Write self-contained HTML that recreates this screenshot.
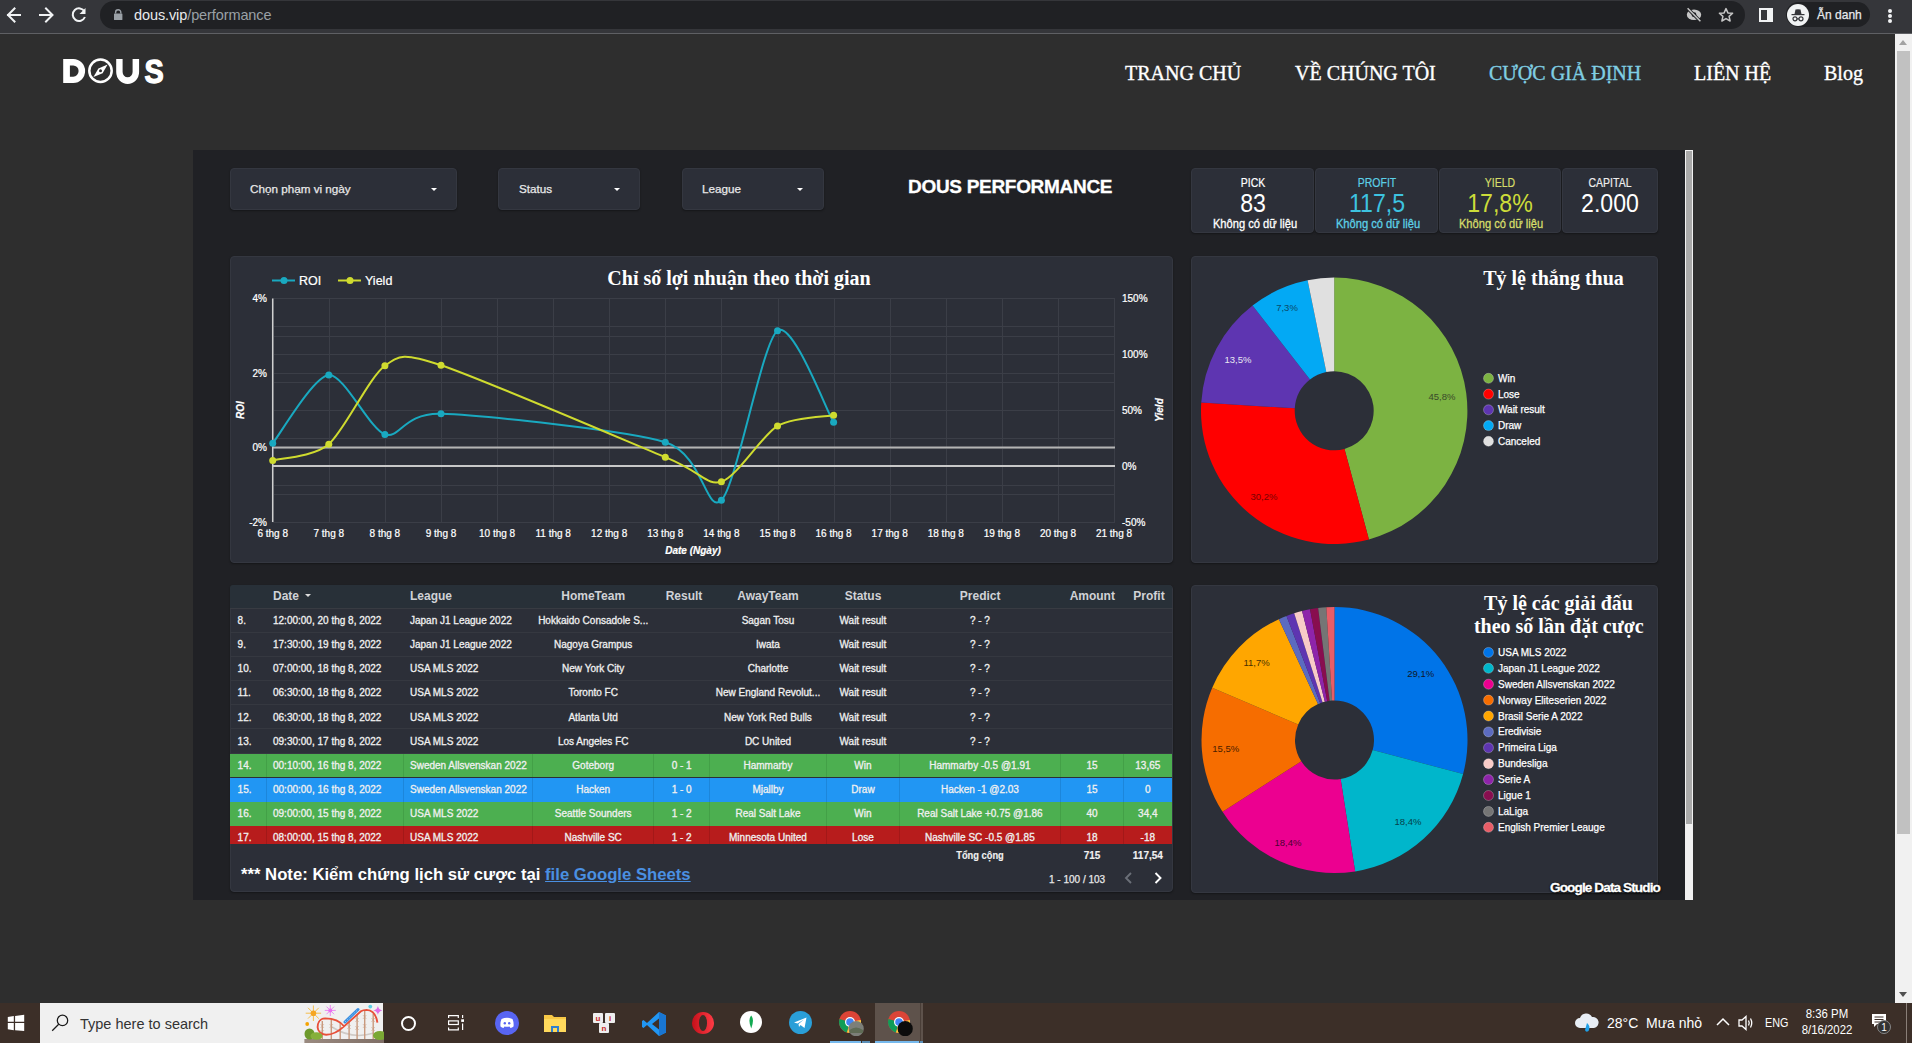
<!DOCTYPE html><html><head><meta charset="utf-8"><style>
*{margin:0;padding:0;box-sizing:border-box}
html,body{width:1912px;height:1043px;overflow:hidden;background:#2e2e2e;font-family:'Liberation Sans',sans-serif}
div{position:absolute}
.nav{top:62px;font:20px 'Liberation Serif',serif;white-space:nowrap;-webkit-text-stroke:0.35px currentColor}
.card{background:#2c2f38;border-radius:4px;border:1px solid #343740;box-shadow:0 1px 2px rgba(0,0,0,0.35)}
.ft{font:11.7px 'Liberation Sans',sans-serif;color:#e8e8e8;white-space:nowrap;-webkit-text-stroke:0.25px currentColor}
.caret{width:0;height:0;border-left:3.5px solid transparent;border-right:3.5px solid transparent;border-top:3.5px solid #fff}
.kl{width:120px;text-align:center;font:12.5px 'Liberation Sans',sans-serif;white-space:nowrap;transform:scaleX(0.84);-webkit-text-stroke:0.2px currentColor}
.kv{width:120px;text-align:center;font:25px 'Liberation Sans',sans-serif;white-space:nowrap;transform:scaleX(0.925)}
.ks{width:120px;text-align:center;font:12.8px 'Liberation Sans',sans-serif;white-space:nowrap;transform:scaleX(0.87);-webkit-text-stroke:0.3px currentColor}
.th{font:bold 12px 'Liberation Sans',sans-serif;color:#d0d2d6;white-space:nowrap}
.td{font:10px 'Liberation Sans',sans-serif;color:#f0f0f0;white-space:nowrap;-webkit-text-stroke:0.3px currentColor}
.tf{font:bold 10px 'Liberation Sans',sans-serif;color:#f0f0f0;white-space:nowrap;-webkit-text-stroke:0.15px currentColor}
.pg{font:10px 'Liberation Sans',sans-serif;color:#e8e8e8;white-space:nowrap;-webkit-text-stroke:0.25px currentColor}
</style></head><body>

<div style="position:absolute;left:0;top:34px;width:1895px;height:969px;background:#2e2e2e;"></div>
<!-- page scrollbar -->
<div style="position:absolute;left:1895px;top:34px;width:17px;height:969px;background:#f1f1f1;"></div>
<div style="position:absolute;left:1897px;top:51px;width:13px;height:783px;background:#c1c1c1;"></div>
<div style="position:absolute;left:1899px;top:40px;width:0;height:0;border-left:4.5px solid transparent;border-right:4.5px solid transparent;border-bottom:5px solid #a3a3a3;"></div>
<div style="position:absolute;left:1899px;top:992px;width:0;height:0;border-left:4.5px solid transparent;border-right:4.5px solid transparent;border-top:5px solid #505050;"></div>

<div id="toolbar" style="position:absolute;left:0;top:0;width:1912px;height:33px;background:#35363a;"></div>
<div style="position:absolute;left:0;top:33px;width:1912px;height:1px;background:#5f6064;"></div>
<!-- back -->
<svg style="position:absolute;left:0;top:0" width="100" height="33" viewBox="0 0 100 33">
 <g stroke="#f1f3f4" stroke-width="2" fill="none" stroke-linecap="square">
  <path d="M8 15 H20"/><path d="M14.5 8.5 L8 15 L14.5 21.5"/>
  <path d="M40 15 H52"/><path d="M46 8.5 L52.5 15 L46 21.5"/>
 </g>
 <path d="M84.5 11.5 A6.3 6.3 0 1 0 84.9 17" stroke="#f1f3f4" stroke-width="2" fill="none"/>
 <path d="M85.5 8 L85.5 14 L79.5 14 Z" fill="#f1f3f4"/>
</svg>
<div style="position:absolute;left:100px;top:1px;width:1645px;height:28px;border-radius:14px;background:#202124;"></div>
<svg style="position:absolute;left:100px;top:0" width="30" height="30" viewBox="100 0 30 30">
 <path d="M115.6 13.6 V12.4 A2.6 2.6 0 0 1 120.8 12.4 V13.6" stroke="#9aa0a6" stroke-width="1.4" fill="none"/>
 <rect x="114" y="13.4" width="8.4" height="6.6" rx="0.6" fill="#9aa0a6"/>
</svg>
<div style="position:absolute;left:134px;top:7px;font:14.5px 'Liberation Sans',sans-serif;color:#e8eaed;white-space:nowrap;letter-spacing:-0.1px">dous.vip<span style="color:#9aa0a6">/performance</span></div>
<!-- eye-off -->
<svg style="position:absolute;left:1680px;top:0" width="60" height="33" viewBox="1680 0 60 33">
 <ellipse cx="1694" cy="14.7" rx="7.2" ry="5.3" fill="#c6c6c6"/>
 <circle cx="1694" cy="14.7" r="2.4" fill="#202124"/>
 <path d="M1687.6 8.3 L1700.4 21.3" stroke="#202124" stroke-width="3.2"/>
 <path d="M1687.6 8.3 L1700.4 21.3" stroke="#c6c6c6" stroke-width="1.5"/>
 <path d="M1726 8.6 L1727.9 12.9 L1732.6 13.3 L1729.1 16.4 L1730.1 21 L1726 18.6 L1721.9 21 L1722.9 16.4 L1719.4 13.3 L1724.1 12.9 Z" stroke="#c6c6c6" stroke-width="1.5" fill="none" stroke-linejoin="round"/>
</svg>
<!-- side panel -->
<div style="position:absolute;left:1759px;top:8px;width:14px;height:14px;border:2px solid #f1f3f4;"></div>
<div style="position:absolute;left:1767px;top:8px;width:6px;height:14px;background:#f1f3f4"></div>
<!-- incognito pill -->
<div style="position:absolute;left:1786px;top:2px;width:84px;height:25px;border-radius:13px;background:#202124;"></div>
<div style="position:absolute;left:1787px;top:4px;width:22px;height:22px;border-radius:11px;background:#f1f3f4;"></div>
<svg style="position:absolute;left:1787px;top:4px" width="22" height="22" viewBox="0 0 22 22">
 <path d="M7.5 10 L8.5 5.5 Q11 4.8 13.5 5.5 L14.5 10 Z" fill="#35363a"/>
 <rect x="4.5" y="10" width="13" height="1.2" fill="#35363a"/>
 <circle cx="8" cy="14.8" r="2" stroke="#35363a" stroke-width="1.2" fill="none"/>
 <circle cx="14" cy="14.8" r="2" stroke="#35363a" stroke-width="1.2" fill="none"/>
 <path d="M10 14.8 H12" stroke="#35363a" stroke-width="1.2"/>
</svg>
<div style="position:absolute;left:1817px;top:7px;font:13.5px 'Liberation Sans',sans-serif;color:#e8eaed;white-space:nowrap;transform:scaleX(0.89);transform-origin:0 0;-webkit-text-stroke:0.25px #e8eaed">Ẫn danh</div>
<div style="position:absolute;left:1888px;top:9px;width:4px;height:4px;border-radius:2px;background:#f1f3f4;box-shadow:0 5px 0 #f1f3f4,0 10px 0 #f1f3f4"></div>

<svg style="position:absolute;left:0;top:0" width="200" height="100" viewBox="0 0 200 100">
 <path fill-rule="evenodd" fill="#fff" d="M63.2 59.1 H73.3 A11.8 11.95 0 0 1 73.3 83 H63.2 Z M69.9 65.4 V76.7 H73.2 A5.4 5.65 0 0 0 73.2 65.4 Z"/>
 <circle cx="100.5" cy="70.8" r="11.2" stroke="#fff" stroke-width="2.5" fill="none"/>
 <path d="M107.6 64.6 L102.6 73.2 L93.4 77 L98.4 68.4 Z" fill="#fff"/>
 <circle cx="100.5" cy="70.8" r="1.5" fill="#2e2e2e"/>
 <path fill="#fff" d="M116.2 59.1 H122.6 V72 A5 5.2 0 0 0 132.6 72 V59.1 H139.1 V72 A11.45 11.9 0 0 1 116.2 72 Z"/>
 <text x="154" y="83" font-family="Liberation Sans" font-weight="bold" font-size="33.5" fill="#fff" stroke="#fff" stroke-width="1.3" text-anchor="middle" transform="translate(154 0) scale(0.86 1) translate(-154 0)">S</text>
</svg>
<div class="nav" style="left:1125px;color:#fff">TRANG CHỦ</div>
<div class="nav" style="left:1295px;color:#fff">VỀ CHÚNG TÔI</div>
<div class="nav" style="left:1489px;color:#80cfe3">CƯỢC GIẢ ĐỊNH</div>
<div class="nav" style="left:1694px;color:#fff">LIÊN HỆ</div>
<div class="nav" style="left:1824px;color:#fff">Blog</div>

<div style="position:absolute;left:193px;top:150px;width:1492px;height:750px;background:#202125;"></div>
<!-- inner scrollbar -->
<div style="position:absolute;left:1685px;top:150px;width:8px;height:750px;background:#f1f1f1;"></div>
<div style="position:absolute;left:1686px;top:151px;width:6px;height:673px;background:#a9a9a9;"></div>
<div class="card" style="left:230px;top:168px;width:227px;height:42px;"></div>
<div class="card" style="left:498px;top:168px;width:142px;height:42px;"></div>
<div class="card" style="left:682px;top:168px;width:142px;height:42px;"></div>
<div class="card" style="left:1191px;top:168px;width:123px;height:65px;"></div>
<div class="card" style="left:1315px;top:168px;width:123px;height:65px;"></div>
<div class="card" style="left:1439px;top:168px;width:122px;height:65px;"></div>
<div class="card" style="left:1562px;top:168px;width:96px;height:65px;"></div>
<div class="card" style="left:230px;top:256px;width:943px;height:307px;"></div>
<div class="card" style="left:1191px;top:256px;width:467px;height:307px;"></div>
<div class="card" style="left:230px;top:585px;width:943px;height:307px;"></div>
<div class="card" style="left:1191px;top:585px;width:467px;height:308px;"></div>
<div class="ft" style="left:250px;top:182px">Chọn phạm vi ngày</div>
<div class="ft" style="left:519px;top:182px">Status</div>
<div class="ft" style="left:702px;top:182px">League</div>
<div class="caret" style="left:431px;top:188px"></div>
<div class="caret" style="left:614px;top:188px"></div>
<div class="caret" style="left:797px;top:188px"></div>
<div style="position:absolute;left:908px;top:176px;font:bold 19px 'Liberation Sans',sans-serif;color:#fff;white-space:nowrap;letter-spacing:-0.3px;-webkit-text-stroke:0.3px #fff">DOUS PERFORMANCE</div>
<div class="kl" style="left:1192.5px;top:176px;color:#fff">PICK</div>
<div class="kv" style="left:1192.5px;top:189px;color:#fff">83</div>
<div class="ks" style="left:1194.5px;top:216px;color:#fff">Không có dữ liệu</div>
<div class="kl" style="left:1316.5px;top:176px;color:#5ccfe6">PROFIT</div>
<div class="kv" style="left:1316.5px;top:189px;color:#3dc3e0">117,5</div>
<div class="ks" style="left:1317.5px;top:216px;color:#5ccfe6">Không có dữ liệu</div>
<div class="kl" style="left:1440px;top:176px;color:#d6dd6a">YIELD</div>
<div class="kv" style="left:1440px;top:189px;color:#cddc39">17,8%</div>
<div class="ks" style="left:1441px;top:216px;color:#d6dd6a">Không có dữ liệu</div>
<div class="kl" style="left:1550px;top:176px;color:#eee">CAPITAL</div>
<div class="kv" style="left:1550px;top:189px;color:#fff">2.000</div>
<svg style="position:absolute;left:0;top:0" width="1912" height="1043" viewBox="0 0 1912 1043">
<g stroke="#3b3e47" stroke-width="1">
<path d="M273.5 298.5 V522"/><path d="M329.5 298.5 V522"/><path d="M385.5 298.5 V522"/><path d="M441.5 298.5 V522"/><path d="M497.5 298.5 V522"/><path d="M553.5 298.5 V522"/><path d="M609.5 298.5 V522"/><path d="M665.5 298.5 V522"/><path d="M721.5 298.5 V522"/><path d="M778.5 298.5 V522"/><path d="M834.5 298.5 V522"/><path d="M890.5 298.5 V522"/><path d="M946.5 298.5 V522"/><path d="M1002.5 298.5 V522"/><path d="M1058.5 298.5 V522"/><path d="M1114.5 298.5 V522"/><path d="M272.7 298.5 H1115"/><path d="M272.7 336.5 H1115"/><path d="M272.7 373.5 H1115"/><path d="M272.7 410.5 H1115"/><path d="M272.7 448.5 H1115"/><path d="M272.7 485.5 H1115"/><path d="M272.7 522.5 H1115"/><path d="M272.7 298.5 H1115"/><path d="M272.7 326.5 H1115"/><path d="M272.7 354.5 H1115"/><path d="M272.7 382.5 H1115"/><path d="M272.7 410.5 H1115"/><path d="M272.7 438.5 H1115"/><path d="M272.7 466.5 H1115"/><path d="M272.7 494.5 H1115"/><path d="M272.7 522.5 H1115"/></g>
<path d="M272.7 447.5 H1115" stroke="#b4b4b4" stroke-width="2"/>
<path d="M272.7 466.1 H1115" stroke="#c8c8c8" stroke-width="2"/>
<path d="M272.7 298.5 V522" stroke="#d0d0d0" stroke-width="1.5"/>
<path d="M272.7 443.2 C280.3 434.0 313.6 376.2 328.8 375.0 C343.9 373.8 369.7 429.2 384.9 434.4 C400.0 439.6 403.1 412.7 441.0 413.8 C478.8 414.9 627.5 430.5 665.3 442.2 C703.2 453.9 706.3 515.3 721.4 500.2 C736.6 485.1 762.4 341.2 777.5 330.7 C792.7 320.2 826.0 409.9 833.6 422.3" stroke="#19a9c0" stroke-width="2" fill="none"/>
<path d="M272.7 460.5 C280.3 458.3 313.6 457.0 328.8 444.2 C343.9 431.4 369.7 376.4 384.9 365.7 C400.0 355.0 403.1 352.8 441.0 365.2 C478.8 377.6 627.5 441.5 665.3 457.2 C703.2 472.9 706.3 485.9 721.4 481.7 C736.6 477.5 762.4 434.9 777.5 425.9 C792.7 416.9 826.0 416.6 833.6 415.2" stroke="#cfdb2f" stroke-width="2" fill="none"/>
<circle cx="272.7" cy="443.2" r="3.5" fill="#19a9c0"/><circle cx="328.8" cy="375" r="3.5" fill="#19a9c0"/><circle cx="384.9" cy="434.4" r="3.5" fill="#19a9c0"/><circle cx="441.0" cy="413.8" r="3.5" fill="#19a9c0"/><circle cx="665.3" cy="442.2" r="3.5" fill="#19a9c0"/><circle cx="721.4" cy="500.2" r="3.5" fill="#19a9c0"/><circle cx="777.5" cy="330.7" r="3.5" fill="#19a9c0"/><circle cx="833.6" cy="422.3" r="3.5" fill="#19a9c0"/><circle cx="272.7" cy="460.5" r="3.5" fill="#cfdb2f"/><circle cx="328.8" cy="444.2" r="3.5" fill="#cfdb2f"/><circle cx="384.9" cy="365.7" r="3.5" fill="#cfdb2f"/><circle cx="441.0" cy="365.2" r="3.5" fill="#cfdb2f"/><circle cx="665.3" cy="457.2" r="3.5" fill="#cfdb2f"/><circle cx="721.4" cy="481.7" r="3.5" fill="#cfdb2f"/><circle cx="777.5" cy="425.9" r="3.5" fill="#cfdb2f"/><circle cx="833.6" cy="415.2" r="3.5" fill="#cfdb2f"/>
<path d="M272 280.5 H295" stroke="#19a9c0" stroke-width="2"/><circle cx="284" cy="280.5" r="3.5" fill="#19a9c0"/>
<path d="M338 280.5 H361" stroke="#cfdb2f" stroke-width="2"/><circle cx="350" cy="280.5" r="3.5" fill="#cfdb2f"/>
<g font-family="Liberation Sans" fill="#fff" stroke="#fff" stroke-width="0.22">
<text x="299" y="285" font-size="12.5">ROI</text><text x="365" y="285" font-size="12.5">Yield</text>
<text x="267" y="302.0" font-size="10" text-anchor="end">4%</text><text x="267" y="376.5" font-size="10" text-anchor="end">2%</text><text x="267" y="451.0" font-size="10" text-anchor="end">0%</text><text x="267" y="525.5" font-size="10" text-anchor="end">-2%</text><text x="1122" y="302.0" font-size="10">150%</text><text x="1122" y="357.9" font-size="10">100%</text><text x="1122" y="413.8" font-size="10">50%</text><text x="1122" y="469.6" font-size="10">0%</text><text x="1122" y="525.5" font-size="10">-50%</text>
<text x="272.7" y="537" font-size="10" text-anchor="middle">6 thg 8</text><text x="328.8" y="537" font-size="10" text-anchor="middle">7 thg 8</text><text x="384.9" y="537" font-size="10" text-anchor="middle">8 thg 8</text><text x="441.0" y="537" font-size="10" text-anchor="middle">9 thg 8</text><text x="497.1" y="537" font-size="10" text-anchor="middle">10 thg 8</text><text x="553.2" y="537" font-size="10" text-anchor="middle">11 thg 8</text><text x="609.2" y="537" font-size="10" text-anchor="middle">12 thg 8</text><text x="665.3" y="537" font-size="10" text-anchor="middle">13 thg 8</text><text x="721.4" y="537" font-size="10" text-anchor="middle">14 thg 8</text><text x="777.5" y="537" font-size="10" text-anchor="middle">15 thg 8</text><text x="833.6" y="537" font-size="10" text-anchor="middle">16 thg 8</text><text x="889.7" y="537" font-size="10" text-anchor="middle">17 thg 8</text><text x="945.8" y="537" font-size="10" text-anchor="middle">18 thg 8</text><text x="1001.9" y="537" font-size="10" text-anchor="middle">19 thg 8</text><text x="1058.0" y="537" font-size="10" text-anchor="middle">20 thg 8</text><text x="1114.0" y="537" font-size="10" text-anchor="middle">21 thg 8</text>
<text x="693" y="554" font-size="10" font-style="italic" font-weight="bold" text-anchor="middle">Date (Ngày)</text>
<text transform="translate(244 410) rotate(-90)" font-size="10" font-style="italic" font-weight="bold" text-anchor="middle">ROI</text>
<text transform="translate(1163 410) rotate(-90)" font-size="10" font-style="italic" font-weight="bold" text-anchor="middle">Yield</text>
</g>
<text x="739" y="285" font-family="Liberation Serif" font-weight="bold" font-size="20" fill="#fff" text-anchor="middle">Chỉ số lợi nhuận theo thời gian</text>
</svg>
<svg style="position:absolute;left:0;top:0" width="1912" height="1043" viewBox="0 0 1912 1043">
<path d="M1334.20 277.60 A133.2 133.2 0 0 1 1368.94 539.39 L1344.50 448.93 A39.5 39.5 0 0 0 1334.20 371.30 Z" fill="#7cb342"/><path d="M1368.94 539.39 A133.2 133.2 0 0 1 1201.26 402.44 L1294.78 408.32 A39.5 39.5 0 0 0 1344.50 448.93 Z" fill="#ff0000"/><path d="M1201.26 402.44 A133.2 133.2 0 0 1 1252.56 305.55 L1309.99 379.59 A39.5 39.5 0 0 0 1294.78 408.32 Z" fill="#5e35b1"/><path d="M1252.56 305.55 A133.2 133.2 0 0 1 1307.60 280.28 L1326.31 372.10 A39.5 39.5 0 0 0 1309.99 379.59 Z" fill="#03a9f4"/><path d="M1307.60 280.28 A133.2 133.2 0 0 1 1334.20 277.60 L1334.20 371.30 A39.5 39.5 0 0 0 1326.31 372.10 Z" fill="#e0e0e0"/>
<path d="M1334.50 607.00 A133 133 0 0 1 1463.09 773.98 L1372.69 750.09 A39.5 39.5 0 0 0 1334.50 700.50 Z" fill="#0074e8"/><path d="M1463.09 773.98 A133 133 0 0 1 1355.15 871.39 L1340.63 779.02 A39.5 39.5 0 0 0 1372.69 750.09 Z" fill="#00b6cb"/><path d="M1355.15 871.39 A133 133 0 0 1 1222.54 811.78 L1301.25 761.32 A39.5 39.5 0 0 0 1340.63 779.02 Z" fill="#ec0090"/><path d="M1222.54 811.78 A133 133 0 0 1 1212.22 687.70 L1298.18 724.47 A39.5 39.5 0 0 0 1301.25 761.32 Z" fill="#f66d00"/><path d="M1212.22 687.70 A133 133 0 0 1 1278.91 619.17 L1317.99 704.12 A39.5 39.5 0 0 0 1298.18 724.47 Z" fill="#ffa600"/><path d="M1278.91 619.17 A133 133 0 0 1 1286.45 615.98 L1320.23 703.17 A39.5 39.5 0 0 0 1317.99 704.12 Z" fill="#5c6bc0"/><path d="M1286.45 615.98 A133 133 0 0 1 1294.18 613.26 L1322.53 702.36 A39.5 39.5 0 0 0 1320.23 703.17 Z" fill="#5e35b1"/><path d="M1294.18 613.26 A133 133 0 0 1 1302.06 611.02 L1324.87 701.69 A39.5 39.5 0 0 0 1322.53 702.36 Z" fill="#f8cbc8"/><path d="M1302.06 611.02 A133 133 0 0 1 1310.06 609.26 L1327.24 701.17 A39.5 39.5 0 0 0 1324.87 701.69 Z" fill="#8e24aa"/><path d="M1310.06 609.26 A133 133 0 0 1 1318.16 608.01 L1329.65 700.80 A39.5 39.5 0 0 0 1327.24 701.17 Z" fill="#880e4f"/><path d="M1318.16 608.01 A133 133 0 0 1 1326.31 607.25 L1332.07 700.57 A39.5 39.5 0 0 0 1329.65 700.80 Z" fill="#757575"/><path d="M1326.31 607.25 A133 133 0 0 1 1334.50 607.00 L1334.50 700.50 A39.5 39.5 0 0 0 1332.07 700.57 Z" fill="#e85d67"/>
<g font-family="Liberation Sans" font-size="9.5" text-anchor="middle">
<text x="1442" y="399.5" fill="#3a4a2a">45,8%</text><text x="1264" y="499.5" fill="#7a0000">30,2%</text><text x="1238" y="362.5" fill="#e8e8f0">13,5%</text><text x="1287" y="310.5" fill="#0a4a6a">7,3%</text><text x="1420.7" y="677" fill="#101828">29,1%</text><text x="1408" y="825" fill="#06424a">18,4%</text><text x="1288" y="846" fill="#4a0030">18,4%</text><text x="1225.8" y="751.5" fill="#4a2000">15,5%</text><text x="1256.5" y="665.5" fill="#4a3000">11,7%</text></g>
<g font-family="Liberation Sans" font-size="10" fill="#fff" stroke="#fff" stroke-width="0.25">
<circle cx="1488.5" cy="378.3" r="5" fill="#7cb342"/><text x="1498" y="381.8">Win</text><circle cx="1488.5" cy="394.1" r="5" fill="#ff0000"/><text x="1498" y="397.6">Lose</text><circle cx="1488.5" cy="409.8" r="5" fill="#5e35b1"/><text x="1498" y="413.3">Wait result</text><circle cx="1488.5" cy="425.6" r="5" fill="#03a9f4"/><text x="1498" y="429.1">Draw</text><circle cx="1488.5" cy="441.3" r="5" fill="#e0e0e0"/><text x="1498" y="444.8">Canceled</text>
<circle cx="1488.5" cy="652.4" r="5" fill="#0074e8"/><text x="1498" y="655.9">USA MLS 2022</text><circle cx="1488.5" cy="668.3" r="5" fill="#00b6cb"/><text x="1498" y="671.8">Japan J1 League 2022</text><circle cx="1488.5" cy="684.2" r="5" fill="#ec0090"/><text x="1498" y="687.7">Sweden Allsvenskan 2022</text><circle cx="1488.5" cy="700.1" r="5" fill="#f66d00"/><text x="1498" y="703.6">Norway Eliteserien 2022</text><circle cx="1488.5" cy="716.0" r="5" fill="#ffa600"/><text x="1498" y="719.5">Brasil Serie A 2022</text><circle cx="1488.5" cy="731.9" r="5" fill="#5c6bc0"/><text x="1498" y="735.4">Eredivisie</text><circle cx="1488.5" cy="747.8" r="5" fill="#5e35b1"/><text x="1498" y="751.3">Primeira Liga</text><circle cx="1488.5" cy="763.7" r="5" fill="#f8cbc8"/><text x="1498" y="767.2">Bundesliga</text><circle cx="1488.5" cy="779.6" r="5" fill="#8e24aa"/><text x="1498" y="783.1">Serie A</text><circle cx="1488.5" cy="795.5" r="5" fill="#880e4f"/><text x="1498" y="799.0">Ligue 1</text><circle cx="1488.5" cy="811.4" r="5" fill="#757575"/><text x="1498" y="814.9">LaLiga</text><circle cx="1488.5" cy="827.3" r="5" fill="#e85d67"/><text x="1498" y="830.8">English Premier Leauge</text>
</g>
<g font-family="Liberation Serif" font-weight="bold" font-size="20" fill="#fff" text-anchor="middle"><text x="1553.5" y="285">Tỷ lệ thắng thua</text><text x="1558.5" y="610">Tỷ lệ các giải đấu</text><text x="1558.8" y="633">theo số lần đặt cược</text></g>
</svg>
<div style="position:absolute;left:1550px;top:880px;font:bold 13.6px 'Liberation Sans',sans-serif;color:#fff;white-space:nowrap;letter-spacing:-0.9px;-webkit-text-stroke:0.3px #fff;text-shadow:0 0 2px #000,0 1px 2px #000">Google Data Studio</div>
<div style="position:absolute;left:230px;top:585px;width:942px;height:23px;background:#283038;border-radius:3px 3px 0 0"></div>
<div class="th" style="left:273px;top:589px">Date</div><div class="th" style="left:410px;top:589px">League</div><div class="th" style="left:533.2px;top:589px;width:120px;text-align:center">HomeTeam</div><div class="th" style="left:624px;top:589px;width:120px;text-align:center">Result</div><div class="th" style="left:708px;top:589px;width:120px;text-align:center">AwayTeam</div><div class="th" style="left:803px;top:589px;width:120px;text-align:center">Status</div><div class="th" style="left:920.2px;top:589px;width:120px;text-align:center">Predict</div><div class="th" style="left:1032.3px;top:589px;width:120px;text-align:center">Amount</div><div class="th" style="left:1089px;top:589px;width:120px;text-align:center">Profit</div><div style="position:absolute;left:305px;top:594px;width:0;height:0;border-left:3px solid transparent;border-right:3px solid transparent;border-top:3.5px solid #ddd"></div>
<div style="position:absolute;left:230px;top:608px;width:943px;height:1px;background:#383b42"></div>
<div style="position:absolute;left:230px;top:608.5px;width:942px;height:235.3px;overflow:hidden">
<div style="position:absolute;left:0;top:23.3px;width:942px;height:1px;background:#353840"></div><div class="td" style="left:7.599999999999994px;top:6.5px">8.</div><div class="td" style="left:43px;top:6.5px">12:00:00, 20 thg 8, 2022</div><div class="td" style="left:180px;top:6.5px">Japan J1 League 2022</div><div class="td" style="left:302.6px;top:6.5px;width:121.2px;text-align:center">Hokkaido Consadole S...</div><div class="td" style="left:479.5px;top:6.5px;width:116.9px;text-align:center">Sagan Tosu</div><div class="td" style="left:596.4px;top:6.5px;width:73.1px;text-align:center">Wait result</div><div class="td" style="left:669.5px;top:6.5px;width:160.8px;text-align:center">? - ?</div>
<div style="position:absolute;left:0;top:47.5px;width:942px;height:1px;background:#353840"></div><div class="td" style="left:7.599999999999994px;top:30.5px">9.</div><div class="td" style="left:43px;top:30.5px">17:30:00, 19 thg 8, 2022</div><div class="td" style="left:180px;top:30.5px">Japan J1 League 2022</div><div class="td" style="left:302.6px;top:30.5px;width:121.2px;text-align:center">Nagoya Grampus</div><div class="td" style="left:479.5px;top:30.5px;width:116.9px;text-align:center">Iwata</div><div class="td" style="left:596.4px;top:30.5px;width:73.1px;text-align:center">Wait result</div><div class="td" style="left:669.5px;top:30.5px;width:160.8px;text-align:center">? - ?</div>
<div style="position:absolute;left:0;top:71.6px;width:942px;height:1px;background:#353840"></div><div class="td" style="left:7.599999999999994px;top:54.5px">10.</div><div class="td" style="left:43px;top:54.5px">07:00:00, 18 thg 8, 2022</div><div class="td" style="left:180px;top:54.5px">USA MLS 2022</div><div class="td" style="left:302.6px;top:54.5px;width:121.2px;text-align:center">New York City</div><div class="td" style="left:479.5px;top:54.5px;width:116.9px;text-align:center">Charlotte</div><div class="td" style="left:596.4px;top:54.5px;width:73.1px;text-align:center">Wait result</div><div class="td" style="left:669.5px;top:54.5px;width:160.8px;text-align:center">? - ?</div>
<div style="position:absolute;left:0;top:95.8px;width:942px;height:1px;background:#353840"></div><div class="td" style="left:7.599999999999994px;top:78.5px">11.</div><div class="td" style="left:43px;top:78.5px">06:30:00, 18 thg 8, 2022</div><div class="td" style="left:180px;top:78.5px">USA MLS 2022</div><div class="td" style="left:302.6px;top:78.5px;width:121.2px;text-align:center">Toronto FC</div><div class="td" style="left:479.5px;top:78.5px;width:116.9px;text-align:center">New England Revolut...</div><div class="td" style="left:596.4px;top:78.5px;width:73.1px;text-align:center">Wait result</div><div class="td" style="left:669.5px;top:78.5px;width:160.8px;text-align:center">? - ?</div>
<div style="position:absolute;left:0;top:119.9px;width:942px;height:1px;background:#353840"></div><div class="td" style="left:7.599999999999994px;top:103.5px">12.</div><div class="td" style="left:43px;top:103.5px">06:30:00, 18 thg 8, 2022</div><div class="td" style="left:180px;top:103.5px">USA MLS 2022</div><div class="td" style="left:302.6px;top:103.5px;width:121.2px;text-align:center">Atlanta Utd</div><div class="td" style="left:479.5px;top:103.5px;width:116.9px;text-align:center">New York Red Bulls</div><div class="td" style="left:596.4px;top:103.5px;width:73.1px;text-align:center">Wait result</div><div class="td" style="left:669.5px;top:103.5px;width:160.8px;text-align:center">? - ?</div>
<div style="position:absolute;left:0;top:144.0px;width:942px;height:1px;background:#353840"></div><div class="td" style="left:7.599999999999994px;top:127.5px">13.</div><div class="td" style="left:43px;top:127.5px">09:30:00, 17 thg 8, 2022</div><div class="td" style="left:180px;top:127.5px">USA MLS 2022</div><div class="td" style="left:302.6px;top:127.5px;width:121.2px;text-align:center">Los Angeles FC</div><div class="td" style="left:479.5px;top:127.5px;width:116.9px;text-align:center">DC United</div><div class="td" style="left:596.4px;top:127.5px;width:73.1px;text-align:center">Wait result</div><div class="td" style="left:669.5px;top:127.5px;width:160.8px;text-align:center">? - ?</div>
<div style="position:absolute;left:0;top:145.4px;width:942px;height:23.5px;background:#4caf50"></div><div style="position:absolute;left:35.9px;top:145.4px;width:1px;height:23.5px;background:#43a047"></div><div style="position:absolute;left:172.8px;top:145.4px;width:1px;height:23.5px;background:#43a047"></div><div style="position:absolute;left:302.1px;top:145.4px;width:1px;height:23.5px;background:#43a047"></div><div style="position:absolute;left:423.3px;top:145.4px;width:1px;height:23.5px;background:#43a047"></div><div style="position:absolute;left:479.0px;top:145.4px;width:1px;height:23.5px;background:#43a047"></div><div style="position:absolute;left:595.9px;top:145.4px;width:1px;height:23.5px;background:#43a047"></div><div style="position:absolute;left:669.0px;top:145.4px;width:1px;height:23.5px;background:#43a047"></div><div style="position:absolute;left:829.8px;top:145.4px;width:1px;height:23.5px;background:#43a047"></div><div style="position:absolute;left:893.2px;top:145.4px;width:1px;height:23.5px;background:#43a047"></div><div class="td" style="left:7.599999999999994px;top:151.5px">14.</div><div class="td" style="left:43px;top:151.5px">00:10:00, 16 thg 8, 2022</div><div class="td" style="left:180px;top:151.5px">Sweden Allsvenskan 2022</div><div class="td" style="left:302.6px;top:151.5px;width:121.2px;text-align:center">Goteborg</div><div class="td" style="left:423.8px;top:151.5px;width:55.7px;text-align:center">0 - 1</div><div class="td" style="left:479.5px;top:151.5px;width:116.9px;text-align:center">Hammarby</div><div class="td" style="left:596.4px;top:151.5px;width:73.1px;text-align:center">Win</div><div class="td" style="left:669.5px;top:151.5px;width:160.8px;text-align:center">Hammarby -0.5 @1.91</div><div class="td" style="left:830.3px;top:151.5px;width:63.4px;text-align:center">15</div><div class="td" style="left:893.7px;top:151.5px;width:48.3px;text-align:center">13,65</div>
<div style="position:absolute;left:0;top:169.6px;width:942px;height:23.5px;background:#2196f3"></div><div style="position:absolute;left:35.9px;top:169.6px;width:1px;height:23.5px;background:#1c86db"></div><div style="position:absolute;left:172.8px;top:169.6px;width:1px;height:23.5px;background:#1c86db"></div><div style="position:absolute;left:302.1px;top:169.6px;width:1px;height:23.5px;background:#1c86db"></div><div style="position:absolute;left:423.3px;top:169.6px;width:1px;height:23.5px;background:#1c86db"></div><div style="position:absolute;left:479.0px;top:169.6px;width:1px;height:23.5px;background:#1c86db"></div><div style="position:absolute;left:595.9px;top:169.6px;width:1px;height:23.5px;background:#1c86db"></div><div style="position:absolute;left:669.0px;top:169.6px;width:1px;height:23.5px;background:#1c86db"></div><div style="position:absolute;left:829.8px;top:169.6px;width:1px;height:23.5px;background:#1c86db"></div><div style="position:absolute;left:893.2px;top:169.6px;width:1px;height:23.5px;background:#1c86db"></div><div class="td" style="left:7.599999999999994px;top:175.5px">15.</div><div class="td" style="left:43px;top:175.5px">00:00:00, 16 thg 8, 2022</div><div class="td" style="left:180px;top:175.5px">Sweden Allsvenskan 2022</div><div class="td" style="left:302.6px;top:175.5px;width:121.2px;text-align:center">Hacken</div><div class="td" style="left:423.8px;top:175.5px;width:55.7px;text-align:center">1 - 0</div><div class="td" style="left:479.5px;top:175.5px;width:116.9px;text-align:center">Mjallby</div><div class="td" style="left:596.4px;top:175.5px;width:73.1px;text-align:center">Draw</div><div class="td" style="left:669.5px;top:175.5px;width:160.8px;text-align:center">Hacken -1 @2.03</div><div class="td" style="left:830.3px;top:175.5px;width:63.4px;text-align:center">15</div><div class="td" style="left:893.7px;top:175.5px;width:48.3px;text-align:center">0</div>
<div style="position:absolute;left:0;top:193.7px;width:942px;height:23.5px;background:#4caf50"></div><div style="position:absolute;left:35.9px;top:193.7px;width:1px;height:23.5px;background:#43a047"></div><div style="position:absolute;left:172.8px;top:193.7px;width:1px;height:23.5px;background:#43a047"></div><div style="position:absolute;left:302.1px;top:193.7px;width:1px;height:23.5px;background:#43a047"></div><div style="position:absolute;left:423.3px;top:193.7px;width:1px;height:23.5px;background:#43a047"></div><div style="position:absolute;left:479.0px;top:193.7px;width:1px;height:23.5px;background:#43a047"></div><div style="position:absolute;left:595.9px;top:193.7px;width:1px;height:23.5px;background:#43a047"></div><div style="position:absolute;left:669.0px;top:193.7px;width:1px;height:23.5px;background:#43a047"></div><div style="position:absolute;left:829.8px;top:193.7px;width:1px;height:23.5px;background:#43a047"></div><div style="position:absolute;left:893.2px;top:193.7px;width:1px;height:23.5px;background:#43a047"></div><div class="td" style="left:7.599999999999994px;top:199.5px">16.</div><div class="td" style="left:43px;top:199.5px">09:00:00, 15 thg 8, 2022</div><div class="td" style="left:180px;top:199.5px">USA MLS 2022</div><div class="td" style="left:302.6px;top:199.5px;width:121.2px;text-align:center">Seattle Sounders</div><div class="td" style="left:423.8px;top:199.5px;width:55.7px;text-align:center">1 - 2</div><div class="td" style="left:479.5px;top:199.5px;width:116.9px;text-align:center">Real Salt Lake</div><div class="td" style="left:596.4px;top:199.5px;width:73.1px;text-align:center">Win</div><div class="td" style="left:669.5px;top:199.5px;width:160.8px;text-align:center">Real Salt Lake +0.75 @1.86</div><div class="td" style="left:830.3px;top:199.5px;width:63.4px;text-align:center">40</div><div class="td" style="left:893.7px;top:199.5px;width:48.3px;text-align:center">34,4</div>
<div style="position:absolute;left:0;top:217.9px;width:942px;height:23.5px;background:#b71c1c"></div><div style="position:absolute;left:35.9px;top:217.9px;width:1px;height:23.5px;background:#a31818"></div><div style="position:absolute;left:172.8px;top:217.9px;width:1px;height:23.5px;background:#a31818"></div><div style="position:absolute;left:302.1px;top:217.9px;width:1px;height:23.5px;background:#a31818"></div><div style="position:absolute;left:423.3px;top:217.9px;width:1px;height:23.5px;background:#a31818"></div><div style="position:absolute;left:479.0px;top:217.9px;width:1px;height:23.5px;background:#a31818"></div><div style="position:absolute;left:595.9px;top:217.9px;width:1px;height:23.5px;background:#a31818"></div><div style="position:absolute;left:669.0px;top:217.9px;width:1px;height:23.5px;background:#a31818"></div><div style="position:absolute;left:829.8px;top:217.9px;width:1px;height:23.5px;background:#a31818"></div><div style="position:absolute;left:893.2px;top:217.9px;width:1px;height:23.5px;background:#a31818"></div><div class="td" style="left:7.599999999999994px;top:223.5px">17.</div><div class="td" style="left:43px;top:223.5px">08:00:00, 15 thg 8, 2022</div><div class="td" style="left:180px;top:223.5px">USA MLS 2022</div><div class="td" style="left:302.6px;top:223.5px;width:121.2px;text-align:center">Nashville SC</div><div class="td" style="left:423.8px;top:223.5px;width:55.7px;text-align:center">1 - 2</div><div class="td" style="left:479.5px;top:223.5px;width:116.9px;text-align:center">Minnesota United</div><div class="td" style="left:596.4px;top:223.5px;width:73.1px;text-align:center">Lose</div><div class="td" style="left:669.5px;top:223.5px;width:160.8px;text-align:center">Nashville SC -0.5 @1.85</div><div class="td" style="left:830.3px;top:223.5px;width:63.4px;text-align:center">18</div><div class="td" style="left:893.7px;top:223.5px;width:48.3px;text-align:center">-18</div>
</div>
<div class="tf" style="left:920px;top:850px;width:120px;text-align:center;transform:scaleX(0.93)">Tổng cộng</div><div class="tf" style="left:1060.3px;top:850px;width:63.4px;text-align:center">715</div><div class="tf" style="left:1123.7px;top:850px;width:48.3px;text-align:center">117,54</div>
<div class="pg" style="left:1049px;top:874px">1 - 100 / 103</div>
<svg style="position:absolute;left:1120px;top:870px" width="50" height="16" viewBox="0 0 50 16"><path d="M11 3 L6 8 L11 13" stroke="#6b6f78" stroke-width="1.9" fill="none"/><path d="M35.5 3 L40.5 8 L35.5 13" stroke="#fff" stroke-width="1.9" fill="none"/></svg>
<div style="position:absolute;left:241px;top:865px;font:bold 16.7px 'Liberation Sans',sans-serif;color:#fff;white-space:nowrap">*** Note: Kiểm chứng lịch sử cược tại <span style="color:#4a90e2;text-decoration:underline">file Google Sheets</span></div>

<div style="position:absolute;left:0;top:1003px;width:1912px;height:40px;background:#3c2f28;"></div>
<!-- windows logo -->
<svg style="position:absolute;left:0;top:1003px" width="40" height="40" viewBox="0 1003 40 40">
 <path d="M7.8 1016.9 L13.8 1016.1 V1021.7 H7.8 Z M15.1 1015.9 L24.2 1014.7 V1021.7 H15.1 Z M7.8 1022.9 H13.8 V1030.2 L7.8 1029.3 Z M15.1 1022.9 H24.2 V1031.1 L15.1 1030.3 Z" fill="#fff"/>
</svg>
<div style="position:absolute;left:40px;top:1003px;width:343px;height:40px;background:#f0f0f0;"></div>
<svg style="position:absolute;left:40px;top:1003px" width="40" height="40" viewBox="40 1003 40 40">
 <circle cx="62.5" cy="1020.4" r="5.2" stroke="#1a1a1a" stroke-width="1.25" fill="none"/>
 <path d="M58.7 1024.3 L52.2 1030.7" stroke="#1a1a1a" stroke-width="1.3"/>
</svg>
<div style="position:absolute;left:80px;top:1016px;font:14.5px 'Liberation Sans',sans-serif;color:#333;white-space:nowrap">Type here to search</div>
<!-- rollercoaster -->
<svg style="position:absolute;left:300px;top:1003px" width="84" height="40" viewBox="300 1003 84 40">
 <defs><linearGradient id="gr" x1="0" x2="1"><stop offset="0" stop-color="#9a8a80"/><stop offset="1" stop-color="#7f6e66"/></linearGradient></defs>
 <path d="M332 1027 Q352 1040 374 1033" stroke="#cfcac6" stroke-width="1.6" fill="none"/>
 <g stroke="#c99a7e" stroke-width="1.4">
  <path d="M322.3 1021 V1039 M331.3 1019 V1039 M340.2 1022 V1039 M349.1 1021 V1039 M357.1 1014 V1039 M364.7 1011 V1039 M373.2 1014 V1039"/>
 </g>
 <g stroke="#c99a7e" stroke-width="0.6" opacity="0.8">
  <path d="M320.5 1024 L324 1028 M324 1024 L320.5 1028 M320.5 1030 L324 1034 M324 1030 L320.5 1034 M329.5 1024 L333 1028 M333 1024 L329.5 1028 M347.3 1025 L350.8 1029 M350.8 1025 L347.3 1029 M355.3 1018 L358.8 1022 M358.8 1018 L355.3 1022 M355.3 1026 L358.8 1030 M358.8 1026 L355.3 1030 M362.9 1015 L366.4 1019 M366.4 1015 L362.9 1019 M362.9 1024 L366.4 1028 M366.4 1024 L362.9 1028 M371.4 1018 L374.9 1022 M374.9 1018 L371.4 1022 M371.4 1027 L374.9 1031 M374.9 1027 L371.4 1031"/>
 </g>
 <path d="M344 1026.4 C340 1021 334 1018.4 325.1 1018.4 C319 1018.6 317.6 1024 317.6 1027.3 C317.8 1031 321 1034.8 326.1 1034.8 C332 1034.8 338 1032 344 1026.4 L360.9 1011.3 C363 1010 365 1009.9 366.6 1009.9 C372 1010.3 376 1013 377.4 1022.6" stroke="#e8503a" stroke-width="1.9" fill="none"/>
 <path d="M345 1022 L358 1009.5" stroke="#3b8fe0" stroke-width="3" stroke-linecap="round"/>
 <path d="M345 1022 L358 1009.5" stroke="#9fd0ff" stroke-width="0.8" stroke-dasharray="1.5 1.5"/>
 <rect x="304.4" y="1039" width="79.6" height="4" fill="url(#gr)"/>
 <ellipse cx="309.5" cy="1034" rx="5" ry="5.5" fill="#6e9a2c"/>
 <ellipse cx="316.5" cy="1036" rx="6" ry="3.8" fill="#86b03a"/>
 <ellipse cx="380" cy="1035.5" rx="7" ry="4.5" fill="#7aa834"/>
 <g stroke="#f6b93b" stroke-width="0.9">
  <path d="M313.4 1005.5 V1021 M305.7 1013.2 H321.1 M308 1007.8 L318.8 1018.6 M318.8 1007.8 L308 1018.6"/>
 </g>
 <circle cx="313.4" cy="1013.2" r="2.8" fill="#f5a623"/>
 <g stroke="#e86ff0" stroke-width="0.8">
  <path d="M330.3 1005 V1016 M324.8 1010.4 H335.8 M326.5 1006.6 L334.1 1014.2 M334.1 1006.6 L326.5 1014.2"/>
 </g>
 <circle cx="330.3" cy="1010.4" r="2" fill="#e86ff0"/>
 <circle cx="370.3" cy="1006.6" r="1.9" fill="#5ccfe6"/>
 <path d="M377.9 1006 Q378.6 1009.6 382.3 1010.4 Q378.6 1011.2 377.9 1014.8 Q377.2 1011.2 373.5 1010.4 Q377.2 1009.6 377.9 1006 Z" fill="#e06ee8"/>
 <circle cx="307.2" cy="1024" r="1.9" fill="#f5a300"/>
</svg>
<!-- cortana circle -->
<div style="position:absolute;left:400.5px;top:1015.5px;width:15px;height:15px;border:2.1px solid #fff;border-radius:50%;"></div>
<!-- task view -->
<svg style="position:absolute;left:440px;top:1003px" width="30" height="40" viewBox="440 1003 30 40">
 <g stroke="#fff" stroke-width="1.2" fill="none">
  <path d="M448.6 1018 V1015.6 H458.3 V1018"/>
  <path d="M448.6 1027.4 V1029.8 H458.3 V1027.4"/>
  <rect x="448.6" y="1020.9" width="9.7" height="3.6"/>
  <path d="M462.6 1015 V1018 M462.6 1023.5 V1030"/>
 </g>
 <rect x="461.2" y="1019.3" width="2.8" height="2.6" fill="#fff"/>
</svg>
<!-- discord -->
<div style="position:absolute;left:495px;top:1011px;width:24px;height:24px;border-radius:50%;background:#5865f2"></div>
<svg style="position:absolute;left:495px;top:1011px" width="24" height="24" viewBox="0 0 24 24"><path d="M6.5 8 Q12 5.5 17.5 8 Q19 11.5 18.5 15.5 Q17 16.8 15.5 17 L14.5 15.5 Q12 16.2 9.5 15.5 L8.5 17 Q7 16.8 5.5 15.5 Q5 11.5 6.5 8 Z" fill="#fff"/><circle cx="9.8" cy="12.3" r="1.2" fill="#5865f2"/><circle cx="14.2" cy="12.3" r="1.2" fill="#5865f2"/></svg>
<!-- folder -->
<svg style="position:absolute;left:543px;top:1012px" width="24" height="22" viewBox="0 0 24 22"><path d="M1 3 H9 L11 5 H23 V20 H1 Z" fill="#f8c846"/><path d="M1 7 H23 V20 H1 Z" fill="#ffd95c"/><path d="M8 14 H16 V20 H14 V16 H10 V20 H8 Z" fill="#2f80d1"/></svg>
<!-- uni keys -->
<svg style="position:absolute;left:592px;top:1011px" width="26" height="24" viewBox="0 0 26 24">
 <rect x="1" y="2" width="10" height="10" rx="1" fill="#eee"/><rect x="13" y="2" width="10" height="10" rx="1" fill="#eee"/><rect x="7" y="12" width="10" height="10" rx="1" fill="#eee"/>
 <text x="6" y="10" font-size="8" fill="#c62828" text-anchor="middle" font-family="Liberation Sans" font-weight="bold">u</text>
 <text x="18" y="10" font-size="8" fill="#c62828" text-anchor="middle" font-family="Liberation Sans" font-weight="bold">i</text>
 <text x="12" y="20" font-size="8" fill="#c62828" text-anchor="middle" font-family="Liberation Sans" font-weight="bold">n</text>
</svg>
<!-- vscode -->
<svg style="position:absolute;left:641px;top:1011px" width="26" height="26" viewBox="0 0 26 26"><path d="M18 1 L25 4.5 V21.5 L18 25 L6 14 L2.5 17 L1 16 V10 L2.5 9 L6 12 Z M18 7.5 L11 13 L18 18.5 Z" fill="#2196f3"/><path d="M18 1 L25 4.5 V21.5 L18 25 Z" fill="#1976d2"/></svg>
<!-- opera -->
<div style="position:absolute;left:692px;top:1011.8px;width:22px;height:22px;border-radius:50%;background:linear-gradient(90deg,#c4101a,#ff3b45)"></div>
<div style="position:absolute;left:698.8px;top:1014.8px;width:8.6px;height:16.6px;border-radius:50%;background:#3c2f28"></div>
<!-- mongodb -->
<div style="position:absolute;left:740px;top:1011px;width:22px;height:22px;border-radius:50%;background:#fff"></div>
<svg style="position:absolute;left:740px;top:1011px" width="22" height="22" viewBox="0 0 22 22"><path d="M11.2 4.5 Q14.8 8.5 11.2 17.5 Q7.6 8.5 11.2 4.5 Z" fill="#13aa52"/></svg>
<!-- telegram -->
<div style="position:absolute;left:789px;top:1011px;width:23px;height:23px;border-radius:50%;background:#2a9fd8"></div>
<svg style="position:absolute;left:789px;top:1011px" width="23" height="23" viewBox="0 0 23 23"><path d="M5 11.5 L17.5 6.5 L15.5 17 L11.5 14 L10 16 L9.5 13 L15 8.5 L8.5 12.5 Z" fill="#fff"/></svg>
<!-- chrome 1 -->
<svg style="position:absolute;left:838px;top:1010px" width="26" height="26" viewBox="0 0 26 26">
 <circle cx="12" cy="12" r="11" fill="#db4437"/>
 <path d="M12 12 L1.5 9 A11 11 0 0 0 9 22.6 Z" fill="#0f9d58"/>
 <path d="M12 12 L9 22.6 A11 11 0 0 0 22.8 10 Z" fill="#ffcd40"/>
 <circle cx="12" cy="12" r="5" fill="#fff"/><circle cx="12" cy="12" r="3.8" fill="#4285f4"/>
 <circle cx="18.2" cy="18.7" r="7.6" fill="#7c7f79"/><path d="M11.5 20 Q18 15 25 20 V23 H11.5 Z" fill="#5f6b55"/>
</svg>
<!-- chrome 2 active -->
<div style="position:absolute;left:875px;top:1003px;width:45px;height:40px;background:#5e524b"></div>
<div style="position:absolute;left:919.5px;top:1003px;width:1.2px;height:40px;background:#4a3e37"></div><div style="position:absolute;left:920.7px;top:1003px;width:2px;height:40px;background:#5e524b"></div>
<svg style="position:absolute;left:887px;top:1010px" width="26" height="26" viewBox="0 0 26 26">
 <circle cx="12" cy="12" r="11" fill="#db4437"/>
 <path d="M12 12 L1.5 9 A11 11 0 0 0 9 22.6 Z" fill="#0f9d58"/>
 <path d="M12 12 L9 22.6 A11 11 0 0 0 22.8 10 Z" fill="#ffcd40"/>
 <circle cx="12" cy="12" r="5" fill="#fff"/><circle cx="12" cy="12" r="3.8" fill="#4285f4"/>
 <circle cx="18.2" cy="18.7" r="7.6" fill="#0c0c0c"/>
</svg>
<div style="position:absolute;left:830px;top:1041px;width:30.5px;height:2px;background:#76b9ed"></div>
<div style="position:absolute;left:862px;top:1041px;width:8px;height:2px;background:#5a8fb8"></div>
<div style="position:absolute;left:875px;top:1041px;width:44px;height:2px;background:#76b9ed"></div>
<div style="position:absolute;left:920px;top:1041px;width:2.6px;height:2px;background:#5a8fb8"></div>
<!-- tray -->
<svg style="position:absolute;left:1574px;top:1012px" width="26" height="22" viewBox="0 0 26 22">
 <path d="M6 16 A5 5 0 0 1 6 6 A6.5 6.5 0 0 1 18 5 A5.5 5.5 0 0 1 20 16 Z" fill="#e8eef5"/>
 <path d="M13 11 Q17 14 14.5 19 Q12 21 11 18 Z" fill="#1ea0e8"/>
</svg>
<div style="position:absolute;left:1607px;top:1015px;font:14px 'Liberation Sans',sans-serif;color:#fff;white-space:nowrap">28°C&nbsp; Mưa nhỏ</div>
<svg style="position:absolute;left:1715px;top:1016px" width="16" height="12" viewBox="0 0 16 12"><path d="M2 9 L8 3 L14 9" stroke="#fff" stroke-width="1.5" fill="none"/></svg>
<svg style="position:absolute;left:1737px;top:1014px" width="20" height="18" viewBox="0 0 20 18"><path d="M2 6 H5 L9 2.5 V15.5 L5 12 H2 Z" stroke="#fff" stroke-width="1.3" fill="none"/><path d="M11.5 6.5 Q13 9 11.5 11.5 M13.5 4.5 Q16 9 13.5 13.5" stroke="#fff" stroke-width="1.3" fill="none"/></svg>
<div style="position:absolute;left:1765px;top:1015px;font:13.5px 'Liberation Sans',sans-serif;color:#fff;white-space:nowrap;transform:scaleX(0.8);transform-origin:0 0">ENG</div>
<div style="position:absolute;left:1800px;top:1006px;width:54px;text-align:center;transform:scaleX(0.95);font:12px/16px 'Liberation Sans',sans-serif;color:#fff;white-space:nowrap">8:36 PM<br>8/16/2022</div>
<svg style="position:absolute;left:1870px;top:1012px" width="24" height="24" viewBox="0 0 24 24">
 <path d="M2 2 H16 V12 H7 L4 15 V12 H2 Z" fill="#fff"/>
 <path d="M4.5 5 H13.5 M4.5 7.5 H13.5 M4.5 10 H10" stroke="#3c2f28" stroke-width="1"/>
 <circle cx="14" cy="15" r="6.5" fill="#333" stroke="#888" stroke-width="1"/>
 <text x="14" y="19" font-size="10" fill="#fff" text-anchor="middle" font-family="Liberation Sans">1</text>
</svg>
<div style="position:absolute;left:1906px;top:1003px;width:1px;height:40px;background:#8a7f78"></div>
</body></html>
